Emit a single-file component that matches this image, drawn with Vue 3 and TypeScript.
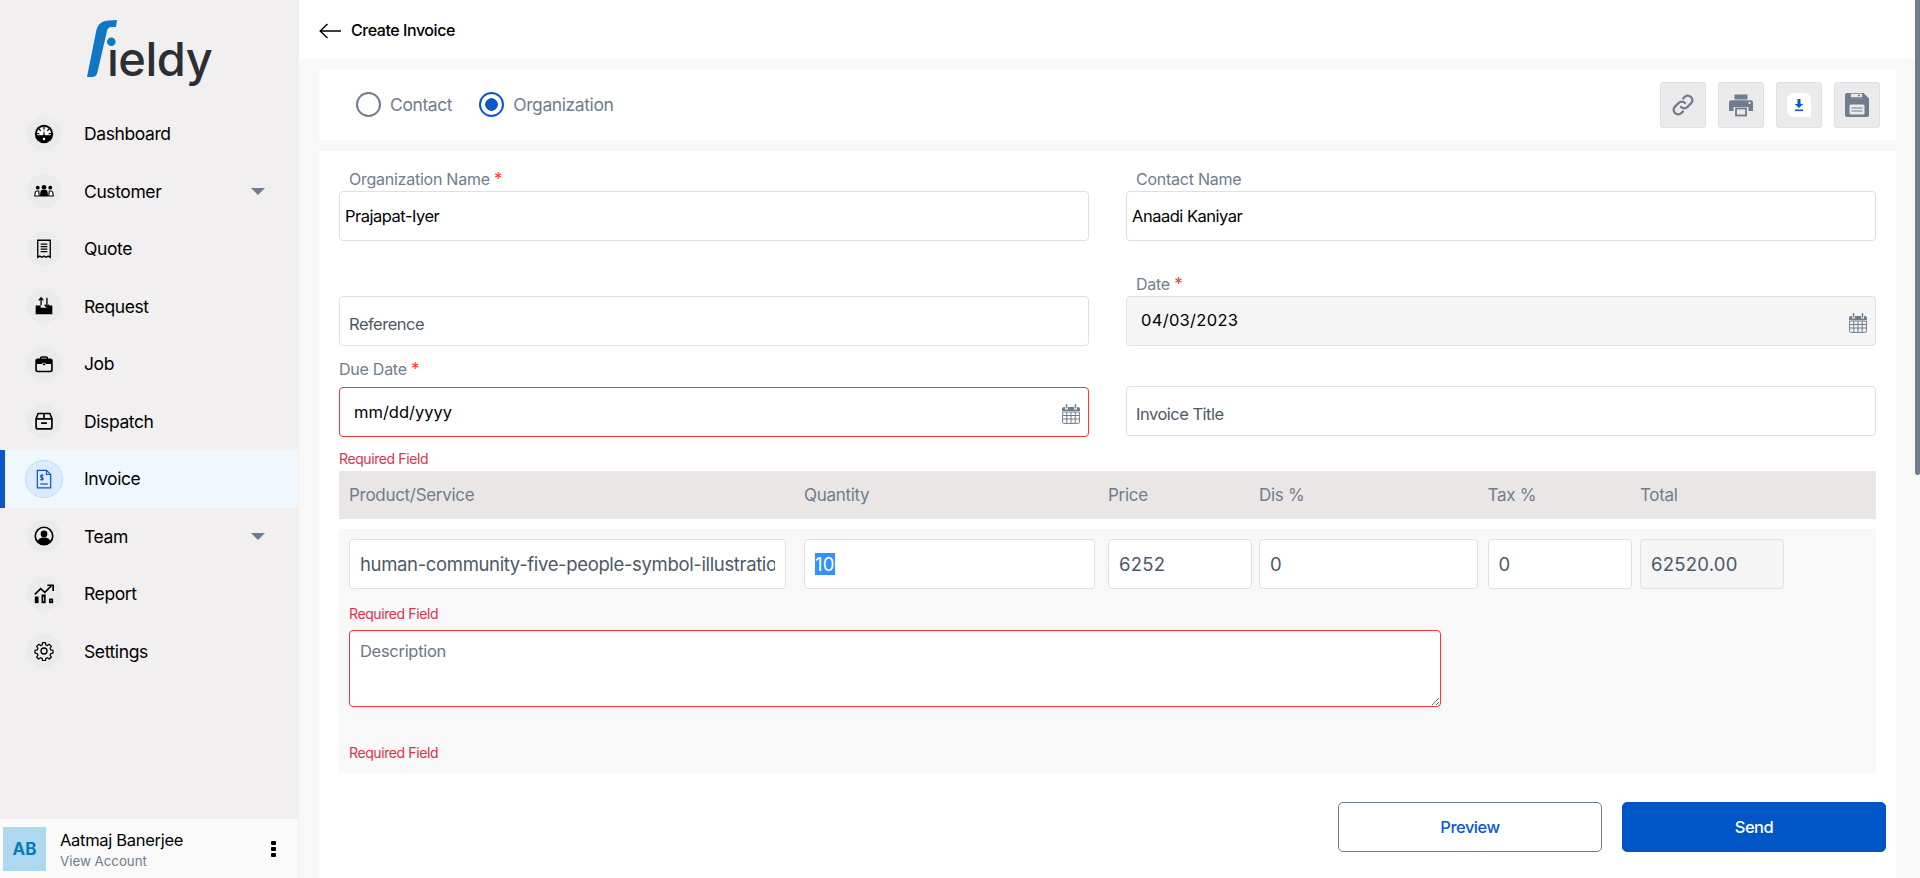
<script setup lang="ts">
import { onMounted, ref } from 'vue'

const qtyInput = ref<HTMLInputElement | null>(null)

const navItems = [
  {
    label: 'Dashboard',
    icon: '<circle cx="12" cy="12" r="11" fill="#000"/><path d="M3.500 14a8.700 8.700 0 1 1 17 0z" fill="#fff"/><path d="M12 3.500v3M6 6l2 2M18 6l-2 2M3.500 11.500h3M20.500 11.500h-3" stroke="#000" stroke-width="1.600"/><path d="M11 14l1-7.500 1 7.500z" fill="#000"/><path d="M2.500 13.500h19v3a11 11 0 0 1-19 0z" fill="#000"/><circle cx="12" cy="18" r="1.500" fill="#fff"/>',
  },
  {
    label: 'Customer',
    caret: true,
    icon: '<circle cx="4.500" cy="8" r="2.300" fill="#000"/><circle cx="19.500" cy="8" r="2.300" fill="#000"/><path d="M.8 18l.8-4.500c.3-1.100 1-1.600 2-1.600h2l.8 6zM23.200 18l-.8-4.500c-.3-1.100-1-1.600-2-1.600h-2l-.8 6z" fill="#fff" stroke="#000" stroke-width="1.300" stroke-linejoin="round"/><circle cx="12" cy="7.500" r="2.800" fill="#000"/><path d="M7 18.500l.8-5.500c.2-1.500 1.200-2.500 2.700-2.500h3c1.500 0 2.500 1 2.700 2.500l.8 5.500z" fill="#000"/>',
  },
  {
    label: 'Quote',
    icon: '<path d="M4.500 1.500h15v20.500l-2.500-1.500-2.500 1.500-2.500-1.500-2.500 1.500-2.500-1.500-2.500 1.500z" fill="none" stroke="#000" stroke-width="1.600"/><path d="M8 6h8M8 9h8M8 12h8M8 15h8" stroke="#000" stroke-width="1.500"/>',
  },
  {
    label: 'Request',
    icon: '<path d="M2 11.500h6V14h8v-2.500h6V22H2z" fill="#000"/><path d="M8.500 11V2.500M5.800 5.200l2.700-3 2.700 3" fill="none" stroke="#000" stroke-width="1.600"/><path d="M15.500 2v11M12.800 10.500l2.700 3 2.700-3" fill="none" stroke="#000" stroke-width="1.600"/>',
  },
  {
    label: 'Job',
    icon: '<path d="M8 6.500V4.700c0-.7.500-1.200 1.200-1.200h5.600c.7 0 1.200.5 1.200 1.200v1.800" fill="none" stroke="#000" stroke-width="1.800"/><rect x="2.500" y="6.500" width="19" height="14.500" rx="2" fill="none" stroke="#000" stroke-width="2"/><path d="M2.500 7h19v5H2.500z" fill="#000"/><rect x="10" y="11" width="4" height="2.800" fill="#000" stroke="#fff" stroke-width=".7"/>',
  },
  {
    label: 'Dispatch',
    icon: '<path d="M2.500 9L5 3h14l2.500 6v10.500c0 1.100-.9 2-2 2h-15c-1.100 0-2-.9-2-2z" fill="none" stroke="#000" stroke-width="2" stroke-linejoin="round"/><path d="M2.500 9.500h19M12 3v6.500M8.500 14.500h7" stroke="#000" stroke-width="2"/>',
  },
  {
    label: 'Invoice',
    active: true,
    icon: '<path d="M4 1.500h11l5 5v16H4z" fill="none" stroke="#0b57c9" stroke-width="1.500"/><path d="M15 1.500v5h5" fill="none" stroke="#0b57c9" stroke-width="1.300"/><path d="M7.500 18h9" stroke="#0b57c9" stroke-width="1.500"/><path d="M11.500 7.500H8.800c-1.300 0-1.300 2.600 0 2.600h1.200c1.300 0 1.300 2.600 0 2.600H7.500M9.500 6v8.200" fill="none" stroke="#0b57c9" stroke-width="1.300"/>',
  },
  {
    label: 'Team',
    caret: true,
    icon: '<circle cx="12" cy="12" r="10.500" fill="none" stroke="#000" stroke-width="2"/><circle cx="12" cy="9.500" r="4" fill="#000"/><path d="M4 18.500c1-3.200 4-4.800 8-4.800s7 1.600 8 4.800c-2 2.500-4.800 3.800-8 3.800s-6-1.300-8-3.800z" fill="#000"/>',
  },
  {
    label: 'Report',
    icon: '<path d="M1 12.500L8 5.500l5 4.500 8.500-8.500" fill="none" stroke="#000" stroke-width="2"/><path d="M16 1.500h7v7" fill="none" stroke="#000" stroke-width="2"/><rect x="1" y="15" width="4.500" height="8" fill="#000"/><rect x="10" y="13.500" width="3" height="8.500" fill="none" stroke="#000" stroke-width="2"/><rect x="19" y="18.500" width="3" height="3.500" fill="none" stroke="#000" stroke-width="2"/>',
  },
  {
    label: 'Settings',
    icon: '<circle cx="12" cy="12" r="3.600" fill="none" stroke="#000" stroke-width="1.600"/><path d="M10.300 2h3.400l.5 2.700 1.900.8 2.300-1.500 2.400 2.400-1.500 2.300.8 1.900 2.700.5v3.400l-2.700.5-.8 1.900 1.500 2.300-2.400 2.400-2.300-1.500-1.900.8-.5 2.700h-3.400l-.5-2.700-1.900-.8-2.300 1.500-2.400-2.400 1.500-2.300-.8-1.900-2.700-.5v-3.400l2.700-.5.8-1.900-1.500-2.300 2.400-2.400 2.300 1.500 1.900-.8z" fill="none" stroke="#000" stroke-width="1.500" stroke-linejoin="round"/>',
  },
]

// The quantity field is shown with its value selected
onMounted(() => {
  qtyInput.value?.focus()
  qtyInput.value?.select()
})
</script>

<template>
  <div class="layout">
    <aside class="sidebar">
      <div class="logo">
        <svg width="135" height="70" viewBox="0 0 135 70">
          <path d="M0 57 L9 12 C10.500 4 15 .5 22 .5 L30 0 L29 7 L25 7 C22 7 20.500 8.500 20 11 L10.500 52 C10 55 8 57 5 57z" fill="#0f78c1" />
          <circle cx="24.300" cy="21.700" r="4.300" fill="#0f78c1" />
          <text x="20" y="56" class="logo-text">ıeldy</text>
        </svg>
      </div>

      <nav class="nav">
        <div v-for="item in navItems" :key="item.label" class="nav-item" :class="{ active: item.active }">
          <span class="nav-icon">
            <svg viewBox="0 0 24 24" class="nav-svg" v-html="item.icon"></svg>
          </span>
          <span class="nav-label">{{ item.label }}</span>
          <span v-if="item.caret" class="caret"></span>
        </div>
      </nav>

      <div class="account">
        <div class="avatar">AB</div>
        <div class="account-text">
          <div class="account-name">Aatmaj Banerjee</div>
          <div class="account-link">View Account</div>
        </div>
        <div class="kebab"><i></i><i></i><i></i></div>
      </div>
    </aside>

    <main class="main">
      <header class="topbar">
        <svg class="back" viewBox="0 0 22 16" fill="none" stroke="#000" stroke-width="1.400">
          <path d="M22 8H1M8.500 1L1.200 8l7.300 7" />
        </svg>
        <span class="page-title">Create Invoice</span>
      </header>

      <div class="content">
        <section class="type-bar">
          <label class="radio"><span class="radio-dot"></span>Contact</label>
          <label class="radio radio-on"><span class="radio-dot"></span>Organization</label>
          <div class="tools">
            <button class="tool">
              <svg viewBox="0 0 24 24" fill="none" stroke="#6f7d8c" stroke-width="2.400" stroke-linecap="round">
                <path d="M10 14a4.500 4.500 0 0 0 6.400 0l3.600-3.600A4.500 4.500 0 0 0 13.600 4l-1.400 1.400" />
                <path d="M14 10a4.500 4.500 0 0 0-6.400 0L4 13.600A4.500 4.500 0 0 0 10.400 20l1.400-1.400" />
              </svg>
            </button>
            <button class="tool">
              <svg viewBox="0 0 24 24" fill="#6f7d8c">
                <rect x="5.500" y="1.500" width="13" height="5" />
                <path d="M0 9.500c0-1.400 1-2.300 2.300-2.300h19.400c1.300 0 2.300.9 2.300 2.300v8.500h-4.500v-4H4.500v4H0z" />
                <rect x="7" y="15.500" width="10" height="7" fill="none" stroke="#6f7d8c" stroke-width="1.800" />
                <circle cx="20.500" cy="10" r="1" fill="#fff" />
              </svg>
            </button>
            <button class="tool">
              <svg viewBox="0 0 24 24">
                <path d="M7 0h10c4 0 7 3 7 7v17H7c-4 0-7-3-7-7V7c0-4 3-7 7-7z" fill="#fff" />
                <path d="M10.500 6h3v5h2.800L12 15l-4.300-4h2.800z" fill="#0b57c9" />
                <rect x="8" y="16.500" width="8" height="1.600" fill="#0b57c9" />
              </svg>
            </button>
            <button class="tool">
              <svg viewBox="0 0 24 24" fill="#6f7d8c">
                <path d="M0 2c0-1.200.8-2 2-2h3.500v5.500h12V0h1L24 5.500V22c0 1.200-.8 2-2 2H2c-1.200 0-2-.8-2-2z" />
                <rect x="5" y="0" width="13" height="5" fill="none" stroke="#6f7d8c" stroke-width="1.500" />
                <rect x="13" y="1.800" width="2" height="1.500" />
                <rect x="4.500" y="11.500" width="15" height="10" rx="1.500" fill="#ebebeb" />
                <path d="M6.500 15h11M6.500 18h11" stroke="#6f7d8c" stroke-width="1.200" />
              </svg>
            </button>
          </div>
        </section>

        <section class="card">
          <div class="form-grid">
            <div class="field">
              <label class="label">Organization Name <em>*</em></label>
              <input class="input input-tight" value="Prajapat-Iyer" />
            </div>
            <div class="field">
              <label class="label">Contact Name</label>
              <input class="input input-tight" value="Anaadi Kaniyar" />
            </div>

            <div class="field field-end row-2">
              <input class="input input-low" placeholder="Reference" />
            </div>
            <div class="field row-2">
              <label class="label">Date <em>*</em></label>
              <div class="input date-box disabled">
                <span class="date-text">04/03/2023</span>
                <svg class="cal" viewBox="0 0 18 20" fill="#6f7d8c">
                  <path d="M0 5c0-1 .8-2 2-2h1v2.500h3V3h6v2.500h3V3h1c1.200 0 2 1 2 2v2H0z" />
                  <rect x="3.800" y="0" width="1.500" height="4.600" rx=".7" />
                  <rect x="12.700" y="0" width="1.500" height="4.600" rx=".7" />
                  <path d="M.6 8h16.800v10.400c0 .6-.4 1-1 1H1.600c-.6 0-1-.4-1-1zM.6 11.500h16.800M.6 15h16.800M4.800 8v11M9 8v11M13.200 8v11" fill="none" stroke="#6f7d8c" stroke-width="1" />
                </svg>
              </div>
            </div>

            <div class="field due">
              <label class="label label-flush">Due Date <em>*</em></label>
              <div class="input date-box invalid">
                <span class="date-text date-empty">mm/dd/yyyy</span>
                <svg class="cal" viewBox="0 0 18 20" fill="#6f7d8c">
                  <path d="M0 5c0-1 .8-2 2-2h1v2.500h3V3h6v2.500h3V3h1c1.200 0 2 1 2 2v2H0z" />
                  <rect x="3.800" y="0" width="1.500" height="4.600" rx=".7" />
                  <rect x="12.700" y="0" width="1.500" height="4.600" rx=".7" />
                  <path d="M.6 8h16.800v10.400c0 .6-.4 1-1 1H1.600c-.6 0-1-.4-1-1zM.6 11.500h16.800M.6 15h16.800M4.800 8v11M9 8v11M13.200 8v11" fill="none" stroke="#6f7d8c" stroke-width="1" />
                </svg>
              </div>
              <div class="error error-due">Required Field</div>
            </div>
            <div class="field title-field">
              <input class="input input-low" placeholder="Invoice Title" />
            </div>
          </div>

          <div class="line-grid line-head">
            <span>Product/Service</span>
            <span>Quantity</span>
            <span>Price</span>
            <span>Dis %</span>
            <span>Tax %</span>
            <span>Total</span>
          </div>

          <div class="line-panel">
            <div class="line-grid line-inputs">
              <input class="input cell" value="human-community-five-people-symbol-illustration" />
              <input ref="qtyInput" class="input cell num" value="10" />
              <input class="input cell num" value="6252" />
              <input class="input cell num" value="0" />
              <input class="input cell num" value="0" />
              <input class="input cell num disabled" value="62520.00" readonly />
            </div>
            <div class="error error-product">Required Field</div>
            <textarea class="description" placeholder="Description"></textarea>
            <div class="error error-desc">Required Field</div>
          </div>

          <div class="actions">
            <button class="btn btn-outline">Preview</button>
            <button class="btn btn-primary">Send</button>
          </div>
        </section>
      </div>
    </main>

    <div class="scrollbar"><div class="thumb"></div></div>
  </div>
</template>

<style>
html, body { margin: 0; height: 100%; overflow: hidden; }
</style>

<style scoped>
.layout {
  display: flex;
  height: 878px;
  overflow: hidden;
  font-family: Inter, "Liberation Sans", sans-serif;
  background: #f8f8f8;
}

/* sidebar */
.sidebar {
  width: 299px;
  flex: none;
  display: flex;
  flex-direction: column;
  background: #f1eff0;
}
.logo { height: 105px; padding: 20px 0 0 87px; box-sizing: border-box; }
.logo svg { display: block; }
.logo-text { font-family: Inter, sans-serif; font-size: 47px; font-weight: 500; letter-spacing: -0.500px; fill: #2b2f33; }
.nav { flex: 1; width: 298px; }
.nav-item {
  height: 57.500px;
  display: flex;
  align-items: center;
  padding-left: 27px;
  box-sizing: border-box;
  color: #000;
  font-size: 17.500px;
  letter-spacing: -0.400px;
}
.nav-icon {
  width: 34px;
  height: 34px;
  flex: none;
  border-radius: 50%;
  background: #ebebeb;
  display: flex;
  align-items: center;
  justify-content: center;
  margin-right: 23px;
}
.nav-svg { width: 20px; height: 20px; }
.nav-label { flex: 1; }
.caret {
  width: 0;
  height: 0;
  margin-right: 33px;
  border-left: 7px solid transparent;
  border-right: 7px solid transparent;
  border-top: 7px solid #6f7d8c;
}
.nav-item.active {
  background: #f0f7ff;
  border-left: 5px solid #0b57c9;
  padding-left: 20px;
}
.nav-item.active .nav-icon {
  width: 38px;
  height: 38px;
  background: #dcebff;
  border: 1px solid #b8dffc;
  box-sizing: border-box;
  margin-right: 21px;
}

.account {
  width: 298px;
  height: 59px;
  flex: none;
  display: flex;
  align-items: center;
  background: #fafafa;
  padding-left: 3px;
  box-sizing: border-box;
}
.avatar {
  width: 43px;
  height: 44px;
  background: #aed8ef;
  color: #0d7ab8;
  font-weight: 700;
  font-size: 17px;
  display: flex;
  align-items: center;
  justify-content: center;
}
.account-text { flex: 1; margin-left: 14px; padding-top: 2px; }
.account-name { font-size: 16.500px; letter-spacing: -0.300px; line-height: 20px; color: #000; }
.account-link { font-size: 13.300px; line-height: 18px; color: #6f7d8c; margin-top: 2px; }
.kebab { display: flex; flex-direction: column; gap: 2px; margin-right: 22px; }
.kebab i { width: 5px; height: 4px; border-radius: 1px; background: #000; }

/* main */
.main { flex: 1; min-width: 0; display: flex; flex-direction: column; }
.topbar {
  height: 59px;
  flex: none;
  background: #fff;
  display: flex;
  align-items: center;
  padding-left: 20px;
}
.back { width: 22px; height: 16px; margin-right: 10px; margin-top: 2px; }
.page-title { font-size: 16px; letter-spacing: -0.450px; font-weight: 500; color: #000; }
.content { padding: 11px 19px 0 20px; }

.type-bar {
  height: 70px;
  background: #fff;
  display: flex;
  align-items: center;
  padding-left: 37px;
  box-sizing: border-box;
}
.radio {
  display: flex;
  align-items: center;
  font-size: 17.500px;
  letter-spacing: -0.400px;
  color: #6f7d8c;
  margin-right: 27px;
  padding-bottom: 1px;
}
.radio-dot {
  width: 25px;
  height: 25px;
  box-sizing: border-box;
  border: 2px solid #6f7d8c;
  border-radius: 50%;
  margin-right: 9px;
  background: #fff;
}
.radio-on .radio-dot {
  border-color: #0b57c9;
  background: radial-gradient(circle, #0b57c9 0 6px, #fff 6.500px);
}
.tools { margin-left: auto; margin-right: 16px; display: flex; gap: 12px; }
.tool {
  width: 46px;
  height: 46px;
  padding: 0;
  background: #ebebeb;
  border: 1px solid #dde0e4;
  border-radius: 3px;
  display: flex;
  align-items: center;
  justify-content: center;
}
.tool svg { width: 24px; height: 24px; }

.card {
  margin-top: 11px;
  background: #fff;
  padding: 17px 20px 40px;
}
.form-grid {
  display: grid;
  grid-template-columns: 750px 750px;
  column-gap: 37px;
}
.field { display: flex; flex-direction: column; }
.field-end { justify-content: flex-end; }
.row-2 { margin-top: 32px; }
.due { margin-top: 14px; }
.title-field { margin-top: 40px; }
.label {
  height: 23px;
  padding-left: 10px;
  font-size: 16px;
  letter-spacing: -0.250px;
  line-height: 22px;
  color: #6f7d8c;
}
.label-flush { height: 27px; padding-left: 0; line-height: 18px; }
.label em { font-style: normal; color: #f33; font-size: 17px; }
.input {
  height: 50px;
  box-sizing: border-box;
  border: 1px solid #dde0e4;
  border-radius: 4px;
  background: #fff;
  font: inherit;
  font-size: 16.500px;
  letter-spacing: -0.500px;
  color: #000;
  outline: none;
  width: 100%;
}
.input-tight { padding: 0 5px; }
.input-low { padding: 6px 9px 0; }
.input-low::placeholder { color: #4d5966; opacity: 1; }
.disabled { background: #f5f5f5; }
.date-box {
  display: flex;
  align-items: center;
  justify-content: space-between;
  padding: 0 8px 0 14px;
}
.date-text { font-size: 16.500px; letter-spacing: 0.300px; margin-top: -2px; }
.date-empty { margin-top: 0; letter-spacing: 0; }
.cal { width: 18px; height: 20px; margin-top: 3px; }
.invalid { border-color: #f33; }
.error {
  font-size: 14px;
  letter-spacing: -0.400px;
  line-height: 15px;
  color: #e0314b;
}
.error-due { margin-top: 14px; }
.error-product { margin-top: 17px; }
.error-desc { margin-top: 38px; }

.line-grid {
  display: grid;
  grid-template-columns: 455px 304px 151px 228.500px 152.500px 144px;
  align-items: center;
}
.line-head {
  height: 48px;
  margin-top: 5px;
  padding-left: 10px;
  background: #ebe6e6;
  color: #6f7d8c;
  font-size: 17px;
  letter-spacing: -0.300px;
}
.line-inputs > :nth-child(1) { width: 437px; }
.line-inputs > :nth-child(2) { width: 290.500px; }
.line-inputs > :nth-child(3) { width: 144px; }
.line-inputs > :nth-child(4) { width: 219px; }
.line-inputs > :nth-child(5) { width: 144.500px; }
.line-panel {
  margin-top: 10px;
  padding: 10px 10px 13px;
  background: #f8f8f8;
}
.cell { padding: 0 10px; font-size: 18.500px; letter-spacing: -0.350px; color: #4d5966; }
.num { letter-spacing: 0.250px; }
.cell::selection { background: #3390ff; color: #fff; }
.description {
  display: block;
  width: 1092px;
  height: 77px;
  margin-top: 9px;
  padding: 10px;
  box-sizing: border-box;
  border: 1px solid #f33;
  border-radius: 4px;
  background: #fff;
  font: inherit;
  font-size: 16.500px;
  letter-spacing: -0.300px;
  outline: none;
  resize: both;
}
.description::placeholder { color: #6b7785; opacity: 1; }

.actions {
  display: flex;
  justify-content: flex-end;
  gap: 20px;
  margin: 29px -10px 0 0;
}
.btn {
  width: 264px;
  height: 50px;
  border-radius: 5px;
  font-family: inherit;
  font-size: 16.500px;
  letter-spacing: -0.500px;
  font-weight: 500;
}
.btn-outline { background: #fff; border: 1px solid #6f7d8c; color: #0b57c9; }
.btn-primary { background: #0056c7; border: 1px solid #0056c7; color: #fff; }

.scrollbar { width: 5px; flex: none; background: #f8f8f8; }
.thumb { height: 475px; background: #6f7d8c; border-radius: 0 0 3px 3px; }
</style>
